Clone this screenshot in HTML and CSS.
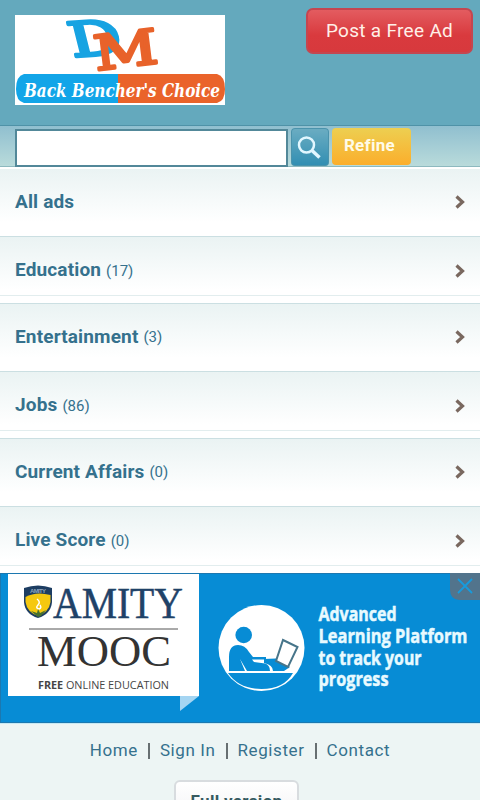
FILE: index.html
```html
<!DOCTYPE html>
<html lang="en">

<head>
    <meta charset="UTF-8">
    <meta name="viewport" content="width=device-width, initial-scale=1.0">
    <title>Back Bencher's Choice</title>
    <link rel="stylesheet" href="styles.css">
</head>

<body>
    <header class="header">
        <svg class="logo" width="210" height="90" viewBox="0 0 210 90">
            <rect width="210" height="90" fill="#fff" />
            <g class="letters">
                <text transform="translate(58 42) rotate(-4) skewX(10)" font-size="48" textLength="52" lengthAdjust="spacingAndGlyphs" fill="#17a3e2" stroke="#17a3e2">D</text>
                <text transform="translate(81 55.500) rotate(-7)" font-size="48" textLength="64" lengthAdjust="spacingAndGlyphs" fill="#e8622a" stroke="#e8622a">M</text>
            </g>
            <path d="M9 59H103V88H9Q1 86 1 74Q1 61 9 59Z" fill="#12a5e8" />
            <path d="M103 59H202Q210 61 210 74Q210 86 202 88H103Z" fill="#ea632a" />
            <text class="tagline" x="9" y="82" textLength="196" lengthAdjust="spacingAndGlyphs">Back Bencher's Choice</text>
        </svg>
        <a class="post" href="#">Post a Free Ad</a>
    </header>

    <form class="search">
        <input class="field" type="text">
        <button class="go" type="button">
            <svg width="38" height="38" viewBox="0 0 38 38" fill="none" stroke="#e2f7ff">
                <circle cx="15.500" cy="17" r="7.500" stroke-width="2.500" />
                <path d="M21 22.500L28.500 29.500" stroke-width="3.500" />
            </svg>
        </button>
        <button class="refine" type="button">Refine</button>
    </form>

    <nav class="list">
        <a class="row" href="#"><b>All ads</b>
            <svg class="arrow" width="12" height="16" viewBox="0 0 12 16"><path d="M2.500 2.500L8.500 8L2.500 13.500" /></svg></a>
        <a class="row" href="#"><b>Education</b><span class="count">(17)</span>
            <svg class="arrow" width="12" height="16" viewBox="0 0 12 16"><path d="M2.500 2.500L8.500 8L2.500 13.500" /></svg></a>
        <a class="row" href="#"><b>Entertainment</b><span class="count">(3)</span>
            <svg class="arrow" width="12" height="16" viewBox="0 0 12 16"><path d="M2.500 2.500L8.500 8L2.500 13.500" /></svg></a>
        <a class="row" href="#"><b>Jobs</b><span class="count">(86)</span>
            <svg class="arrow" width="12" height="16" viewBox="0 0 12 16"><path d="M2.500 2.500L8.500 8L2.500 13.500" /></svg></a>
        <a class="row" href="#"><b>Current Affairs</b><span class="count">(0)</span>
            <svg class="arrow" width="12" height="16" viewBox="0 0 12 16"><path d="M2.500 2.500L8.500 8L2.500 13.500" /></svg></a>
        <a class="row" href="#"><b>Live Score</b><span class="count">(0)</span>
            <svg class="arrow" width="12" height="16" viewBox="0 0 12 16"><path d="M2.500 2.500L8.500 8L2.500 13.500" /></svg></a>
    </nav>

    <svg class="banner" width="480" height="150" viewBox="0 0 480 150">
        <rect width="480" height="150" fill="#078cd5" />
        <path d="M0 .5H480M.5 0V150M0 149.500H480" fill="none" stroke="#1c78b0" />
        <rect x="8" y="1" width="191" height="122" fill="#fff" />
        <path d="M180 123H199L180 138Z" fill="#a5d5f2" />

        <!-- shield -->
        <path d="M24 15Q38 10 52 15V29Q51 41 38 45Q25 41 24 29Z" fill="#1d3d62" />
        <path d="M25.500 24Q36 18 50.500 22V29Q49 39 38 43Q27 39 25.500 29Z" fill="#f5c80f" />
        <text class="crest" x="30" y="20" textLength="16">AMITY</text>
        <path d="M37 26Q41 29 38 32Q35 35 39 36Q42 35 40 32" fill="none" stroke="#fff" stroke-width="1.500" />
        <path d="M31 38L37 40L38 36L40 40L46 37L41 43L38 44Z" fill="#46702e" />

        <text class="amity" x="53" y="44.500" textLength="130" lengthAdjust="spacingAndGlyphs">AMITY</text>
        <path d="M29 56H178" stroke="#555" />
        <text class="mooc" x="37" y="93" textLength="134" lengthAdjust="spacingAndGlyphs">MOOC</text>
        <text class="free" x="38" y="116" textLength="131" lengthAdjust="spacingAndGlyphs"><tspan font-weight="700">FREE</tspan> ONLINE EDUCATION</text>

        <!-- student with laptop -->
        <circle cx="261.500" cy="75" r="43" fill="#fff" />
        <g fill="#078cd5">
            <circle cx="243.700" cy="62" r="8.300" />
            <path d="M229 98V84Q229 72 238 72Q245 72 249 79L253 84H266V86.500H252L254 89L265 90.500Q270 92 270 98H247L240 86L245 98H229Z" />
            <path d="M264 86L276 85.500L290 94L284 98H273Q273 92 264 90Z" />
            <path d="M228 100H293Q284 116 261.500 116Q239 116 228 100Z" />
        </g>
        <path d="M283 67L297.500 74L288 94L276 88Z" fill="#fff" stroke="#47758a" stroke-width="2" />

        <g class="pitch">
            <text x="318.500" y="48" textLength="78" lengthAdjust="spacingAndGlyphs">Advanced</text>
            <text x="318.500" y="69.500" textLength="149" lengthAdjust="spacingAndGlyphs">Learning Platform</text>
            <text x="318.500" y="91.500" textLength="103" lengthAdjust="spacingAndGlyphs">to track your</text>
            <text x="318.500" y="113" textLength="70" lengthAdjust="spacingAndGlyphs">progress</text>
        </g>
        <path d="M450 0H480V27H459Q450 26 450 17Z" fill="#52748c" />
        <path d="M458 6L472 20M472 6L458 20" stroke="#179bdc" stroke-width="1.800" />
    </svg>

    <footer class="footer">
        <div class="links">
            <a href="#">Home</a><i></i><a href="#">Sign In</a><i></i><a href="#">Register</a><i></i><a href="#">Contact</a>
        </div>
        <a class="full" href="#">Full version</a>
    </footer>
</body>

</html>
```
FILE: styles.css
```css
* {
    box-sizing: border-box;
}

body {
    margin: 0;
    height: 800px;
    overflow: hidden;
    background-color: #edf5f4;
    font-family: Roboto, "Liberation Sans", sans-serif;
    color: #35718d;
}

a {
    color: inherit;
    text-decoration: none;
}

.header {
    display: flex;
    justify-content: space-between;
    align-items: flex-start;
    height: 126px;
    padding: 8px 7px 0 15px;
    background-color: #64a9bd;
    border-bottom: 1px solid #4f92a7;
}

.logo {
    margin-top: 7px;
}

.letters {
    font-family: "DejaVu Serif", serif;
    stroke-width: 3;
    stroke-linejoin: round;
}

.tagline {
    font: italic bold 18px "DejaVu Serif", serif;
    fill: #fff;
}

.post {
    width: 167px;
    height: 46px;
    border: 2px solid #c44650;
    border-radius: 7px;
    background-image: linear-gradient(#e35c60, #d93a3e 60%, #d7393d);
    color: #fff0e8;
    font-size: 19px;
    letter-spacing: 0.3px;
    line-height: 42px;
    text-align: center;
}

.search {
    display: flex;
    height: 41px;
    padding: 2px 0 0 15px;
    background-image: linear-gradient(#90bfcf, #b9dbdb);
    border-bottom: 1px solid #8db9bf;
}

.field {
    width: 273px;
    height: 38px;
    margin: 1px 3px 0 0;
    padding: 0 8px;
    border: 2px solid #528899;
    background-color: #fff;
}

.go {
    width: 38px;
    height: 38px;
    margin-right: 3px;
    padding: 0;
    border: 0;
    border-radius: 4px;
    background-image: linear-gradient(#6cadc2, #318eb2);
    box-shadow: inset 0 0 0 1px #4b93ac;
}

.go svg {
    display: block;
}

.refine {
    width: 79px;
    height: 37px;
    padding: 0 4px 3px 0;
    border: 0;
    border-radius: 4px;
    background-image: linear-gradient(#edcf51, #fbae2c);
    color: #fffbe8;
    font: bold 17px Roboto, sans-serif;
    letter-spacing: 0.3px;
}

.list {
    height: 406px;
    padding-top: 2px;
    overflow: hidden;
    background-color: #fff;
}

.row {
    display: flex;
    align-items: center;
    height: 67.5px;
    padding: 0 14px 2px 15px;
    background-image: linear-gradient(#eaf3f3, #fff 80%);
    border-bottom: 1px solid #cbdfe2;
    font-size: 19px;
}

.row:nth-child(even) {
    padding-bottom: 0;
    background-image: linear-gradient(#eaf3f3, #fff 80%, #fff 58px, #e2edee 58px, #e2edee 59px, #fff 59px);
}

.row b {
    letter-spacing: 0.15px;
}

.count {
    margin: 2px 0 0 5px;
    font-size: 15px;
}

.arrow {
    margin: 2px 0 0 auto;
    fill: none;
    stroke: #79685f;
    stroke-width: 3.2;
}

.banner {
    display: block;
}

.crest {
    font: bold 6px "Liberation Sans", sans-serif;
    fill: #8fa5ba;
}

.amity {
    font: 44px "Liberation Serif", serif;
    fill: #1f4268;
    stroke: #1f4268;
    stroke-width: 0.5;
}

.mooc {
    font: 44px "Liberation Serif", serif;
    fill: #333;
}

.free {
    font: 11px "Open Sans", sans-serif;
    fill: #454545;
}

.pitch {
    font: bold 19px "Open Sans", sans-serif;
    fill: #e8faff;
    stroke: #e8faff;
    stroke-width: 0.5;
}

.footer {
    display: flex;
    flex-direction: column;
    align-items: center;
    border-top: 1px solid #c6e9f3;
}

.links {
    display: flex;
    align-items: center;
    height: 51px;
    margin-bottom: 5px;
    font-size: 17px;
    letter-spacing: 0.6px;
}

.links i {
    width: 2px;
    height: 16px;
    margin: 2px 10px 0;
    background-color: #676f71;
}

.full {
    width: 125px;
    height: 44px;
    margin-right: 7px;
    border: 2px solid #d8dcdf;
    border-radius: 6px;
    background-image: linear-gradient(#fff, #f2f2f4);
    color: #365a60;
    font-size: 17px;
    font-weight: bold;
    letter-spacing: 0.3px;
    line-height: 39px;
    text-align: center;
}
```
